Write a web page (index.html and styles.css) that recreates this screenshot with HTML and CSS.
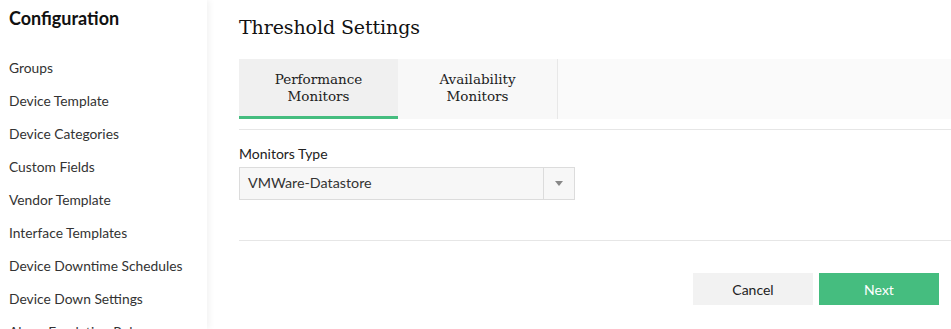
FILE: index.html
```html
<!DOCTYPE html>
<html>
<head>
    <title>Threshold Settings</title>
    <link rel="stylesheet" href="styles.css">
</head>
<body>
    <div class="page">
        <div class="sidebar">
            <h3>Configuration</h3>
            <ul class="menu">
                <li>Groups</li>
                <li>Device Template</li>
                <li>Device Categories</li>
                <li>Custom Fields</li>
                <li>Vendor Template</li>
                <li>Interface Templates</li>
                <li>Device Downtime Schedules</li>
                <li>Device Down Settings</li>
                <li>Alarm Escalation Rules</li>
            </ul>
        </div>
        <div class="main">
            <h2>Threshold Settings</h2>
            <div class="tabs">
                <div class="tab active">Performance<br>Monitors</div>
                <div class="tab">Availability<br>Monitors</div>
                <div class="tab-rest"></div>
            </div>
            <div class="form">
                <label for="monitorType">Monitors Type</label>
                <div class="select" id="monitorType">
                    <span class="value">VMWare-Datastore</span>
                    <span class="arrow"></span>
                </div>
            </div>
            <div class="actions">
                <button class="btn cancel">Cancel</button>
                <button class="btn next">Next</button>
            </div>
        </div>
    </div>
</body>
</html>
```

FILE: styles.css
```css
body {
    margin: 0;
    padding: 0;
    font-family: 'Lato', 'Open Sans', sans-serif;
    color: #333;
    background-color: #fff;
    font-size: 13px;
    overflow: hidden;
}
.page {
    display: flex;
    height: 329px;
    overflow: hidden;
}
.sidebar {
    width: 207px;
    flex-shrink: 0;
    padding: 7px 0 0 9px;
    box-sizing: border-box;
    background-color: #fff;
    box-shadow: 2px 0 7px rgba(0, 0, 0, 0.06);
    position: relative;
    z-index: 1;
}
.sidebar h3 {
    margin: 0;
    font-size: 18px;
    font-weight: 700;
    color: #111;
    line-height: 22px;
}
.menu {
    list-style: none;
    margin: 30px 0 0 0;
    padding: 0;
}
.menu li {
    height: 33px;
    line-height: 17px;
    font-size: 13.8px;
    color: #333;
}
.main {
    flex: 1;
    padding: 14px 0 0 32px;
}
.main h2 {
    margin: 0;
    font-family: 'DejaVu Serif', serif;
    font-weight: normal;
    font-size: 19px;
    line-height: 26px;
    color: #111;
    letter-spacing: -0.1px;
}
.tabs {
    display: flex;
    margin-top: 19px;
    height: 60px;
    border-bottom: 1px solid #e6e6e6;
    padding-bottom: 10px;
}
.tab {
    width: 159px;
    box-sizing: border-box;
    display: flex;
    align-items: center;
    justify-content: center;
    text-align: center;
    font-family: 'DejaVu Serif', serif;
    font-size: 13.5px;
    line-height: 17px;
    color: #222;
    background-color: #f8f8f8;
    padding-bottom: 3px;
}
.tab.active {
    background-color: #f0f0f0;
    border-bottom: 3px solid #45bd7f;
    padding-bottom: 0;
}
.tab-rest {
    flex: 1;
    background-color: #fafafa;
    border-left: 1px solid #e8e8e8;
}
.form {
    padding-top: 15px;
    height: 95px;
    border-bottom: 1px solid #e6e6e6;
}
.form label {
    display: block;
    font-size: 14px;
    line-height: 17px;
    color: #222;
    margin-bottom: 5px;
}
.select {
    display: flex;
    width: 336px;
    height: 33px;
    box-sizing: border-box;
    border: 1px solid #dcdcdc;
    background-color: #f7f7f7;
}
.select .value {
    flex: 1;
    padding-left: 8px;
    line-height: 29px;
    font-size: 14.3px;
    color: #333;
    border-right: 1px solid #dcdcdc;
}
.select .arrow {
    width: 30px;
    position: relative;
}
.select .arrow::after {
    content: '';
    position: absolute;
    left: 11px;
    top: 13px;
    border-left: 4px solid transparent;
    border-right: 4px solid transparent;
    border-top: 5px solid #888;
}
.actions {
    display: flex;
    justify-content: flex-end;
    gap: 6px;
    padding: 32px 12px 0 0;
}
.btn {
    width: 120px;
    height: 32px;
    border: none;
    font-family: 'Lato', sans-serif;
    font-size: 14px;
    cursor: pointer;
}
.cancel {
    background-color: #f2f2f2;
    color: #222;
}
.next {
    background-color: #45bd7f;
    color: #fff;
}
```
